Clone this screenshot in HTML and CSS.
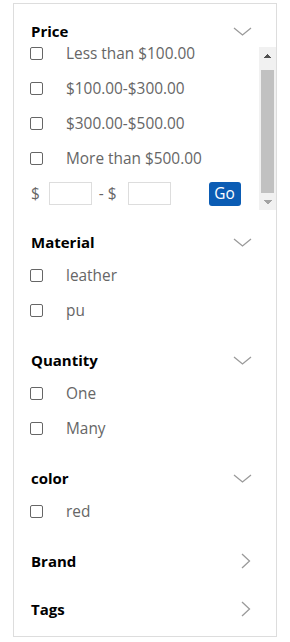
FILE: index.html
```html
<!DOCTYPE html>
<html lang="en">
<head>
  <meta charset="UTF-8" />
  <meta name="viewport" content="width=device-width, initial-scale=1.0"/>
  <title>Filters</title>
  <link rel="stylesheet" href="styles.css">
</head>
<body>
  <div class="filters">

    <!-- Price -->
    <div class="section">
      <div class="section-head">
        <span>Price</span>
        <svg class="chev-down" width="19" height="9" viewBox="0 0 19 9"><polyline points="1,1 9.5,8 18,1" /></svg>
      </div>
      <div class="scroll-box">
        <div class="scroll-list" id="priceList">
          <label class="option"><input type="checkbox"><span>Less than $100.00</span></label>
          <label class="option"><input type="checkbox"><span>$100.00-$300.00</span></label>
          <label class="option"><input type="checkbox"><span>$300.00-$500.00</span></label>
          <label class="option"><input type="checkbox"><span>More than $500.00</span></label>
          <div class="range">
            <span>$</span>
            <input type="text" class="range-input">
            <span class="dash">- $</span>
            <input type="text" class="range-input">
            <button class="go">Go</button>
          </div>
        </div>
        <!-- drawn scrollbar, the headless browser hides the real one -->
        <div class="scrollbar">
          <div class="sb-btn sb-up"></div>
          <div class="sb-gap"></div>
          <div class="sb-thumb"></div>
          <div class="sb-btn sb-down"></div>
        </div>
      </div>
    </div>

    <!-- Material -->
    <div class="section">
      <div class="section-head">
        <span>Material</span>
        <svg class="chev-down" width="19" height="9" viewBox="0 0 19 9"><polyline points="1,1 9.5,8 18,1" /></svg>
      </div>
      <label class="option"><input type="checkbox"><span>leather</span></label>
      <label class="option"><input type="checkbox"><span>pu</span></label>
    </div>

    <!-- Quantity -->
    <div class="section">
      <div class="section-head">
        <span>Quantity</span>
        <svg class="chev-down" width="19" height="9" viewBox="0 0 19 9"><polyline points="1,1 9.5,8 18,1" /></svg>
      </div>
      <label class="option"><input type="checkbox"><span>One</span></label>
      <label class="option"><input type="checkbox"><span>Many</span></label>
    </div>

    <!-- color -->
    <div class="section">
      <div class="section-head">
        <span>color</span>
        <svg class="chev-down" width="19" height="9" viewBox="0 0 19 9"><polyline points="1,1 9.5,8 18,1" /></svg>
      </div>
      <label class="option"><input type="checkbox"><span>red</span></label>
    </div>

    <!-- collapsed ones -->
    <div class="section">
      <div class="section-head">
        <span>Brand</span>
        <svg class="chev-right" width="10" height="16" viewBox="0 0 10 16"><polyline points="1,1 8.5,8 1,15" /></svg>
      </div>
    </div>

    <div class="section">
      <div class="section-head">
        <span>Tags</span>
        <svg class="chev-right" width="10" height="16" viewBox="0 0 10 16"><polyline points="1,1 8.5,8 1,15" /></svg>
      </div>
    </div>

  </div>

  <script>
    // price list shows scrolled down a little
    const priceList = document.getElementById('priceList');
    priceList.scrollTop = 11;
  </script>
</body>
</html>
```

FILE: styles.css
```css
body {
  margin: 3px 0 0 13px;
  font-family: 'Open Sans', 'Noto Sans', sans-serif;
  background-color: #fff;
}

.filters {
  width: 262px;
  border: 1px solid #ddd;
  padding: 11px 0;
  display: flex;
  flex-direction: column;
  gap: 16px;
}

.section {
  display: flex;
  flex-direction: column;
}

.section-head {
  height: 32px;
  display: flex;
  align-items: center;
  justify-content: space-between;
  padding: 0 24px 0 17px;
  font-size: 15px;
  font-weight: 700;
  color: #000;
}

.section-head svg polyline {
  fill: none;
  stroke: #9a9a9a;
  stroke-width: 1.3;
}

.chev-right {
  margin-right: 1px;
}

.option {
  height: 35px;
  display: flex;
  align-items: center;
  padding-left: 16px;
  font-size: 15.4px;
  color: #666;
  white-space: nowrap;
}

.option input {
  appearance: none;
  width: 13px;
  height: 13px;
  margin: 0 23px 0 0;
  border: 1px solid #666;
  border-radius: 2px;
  background: #fff;
  flex-shrink: 0;
}

.scroll-box {
  display: flex;
  height: 163px;
}

.scroll-list {
  flex: 1;
  overflow: hidden;
}

.range {
  height: 35px;
  display: flex;
  align-items: center;
  padding-left: 17px;
  font-size: 15.4px;
  color: #666;
}

.range-input {
  width: 43px;
  height: 23px;
  box-sizing: border-box;
  border: 1px solid #ddd;
  margin-left: 9px;
  padding: 0;
}

.dash {
  margin: 0 2px 0 7px;
}

.go {
  margin-left: 38px;
  width: 32px;
  height: 24px;
  padding: 0;
  border: none;
  border-radius: 3px;
  background-color: #0b5cb4;
  color: white;
  font-family: 'Open Sans', 'Noto Sans', sans-serif;
  font-size: 15.4px;
}

/* scrollbar */
.scrollbar {
  width: 17px;
  background-color: #f1f1f1;
  display: flex;
  flex-direction: column;
}

.sb-btn {
  height: 17px;
  background-repeat: no-repeat;
  background-position: center;
  background-size: 8px 4px;
}

.sb-up {
  background-image: conic-gradient(from 135deg at 50% 0, #505050 0 90deg, transparent 0);
}

.sb-down {
  background-image: conic-gradient(from -45deg at 50% 100%, #a3a3a3 0 90deg, transparent 0);
}

.sb-gap {
  height: 6px;
}

.sb-thumb {
  flex: 1;
  margin: 0 2px;
  background-color: #c1c1c1;
}
```
